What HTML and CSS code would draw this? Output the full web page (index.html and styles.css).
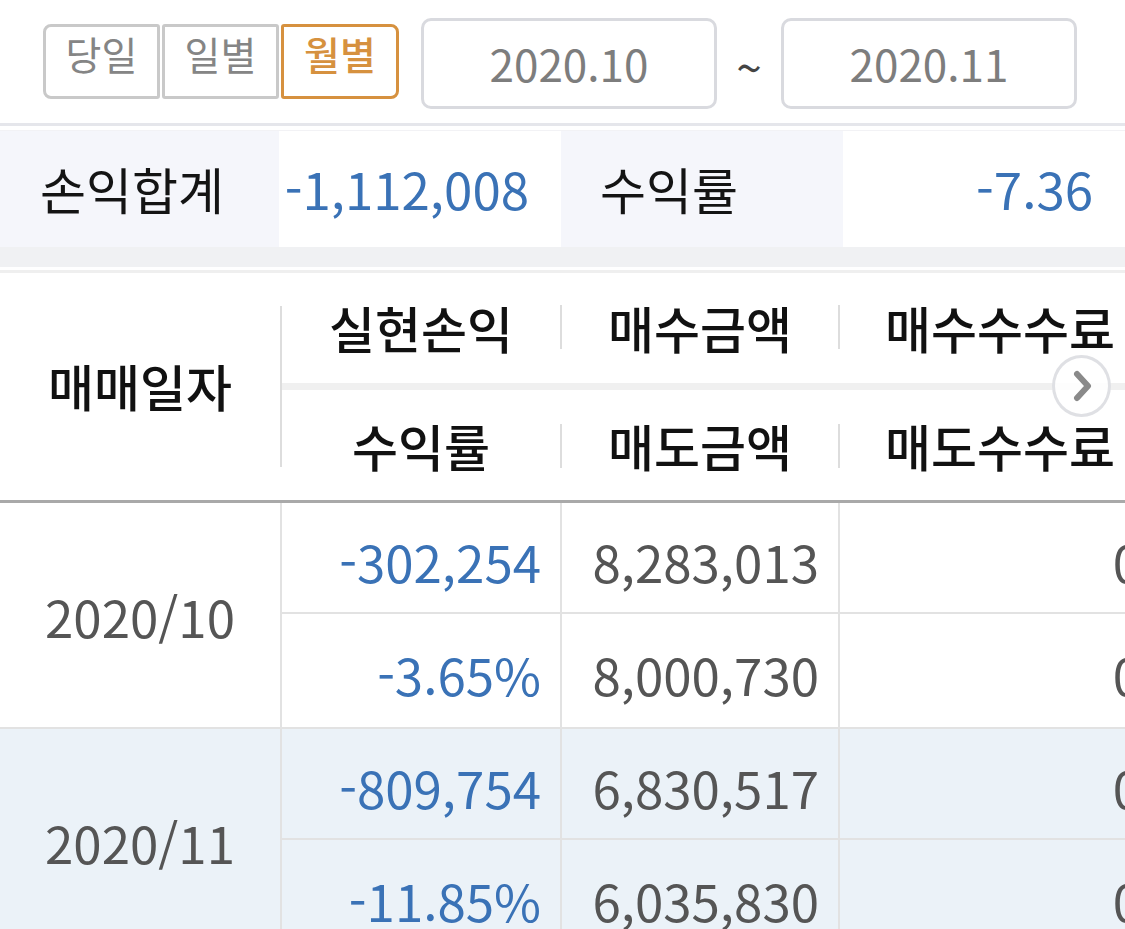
FILE: index.html
```html
<!DOCTYPE html>
<html lang="ko">
<head>
<meta charset="utf-8">
<title>월별 손익</title>
<link rel="stylesheet" href="styles.css">
</head>
<body>
<div class="page">
  <div class="toolbar">
    <div class="tabs">
      <div class="tab tab-first">당일</div>
      <div class="tab">일별</div>
      <div class="tab tab-last tab-active">월별</div>
    </div>
    <div class="date-box">2020.10</div>
    <div class="tilde">~</div>
    <div class="date-box">2020.11</div>
  </div>

  <div class="summary">
    <div class="sum-label sum-label-1">손익합계</div>
    <div class="sum-value sum-value-1">-1,112,008</div>
    <div class="sum-label sum-label-2">수익률</div>
    <div class="sum-value sum-value-2">-7.36</div>
  </div>
  <div class="band"></div>

  <div class="table">
    <div class="thead">
      <div class="h-date">매매일자</div>
      <div class="h-vsep"></div>
      <div class="h-right">
        <div class="h-row">
          <div class="h-cell h-c1">실현손익</div>
          <div class="h-sep"></div>
          <div class="h-cell h-c2">매수금액</div>
          <div class="h-sep"></div>
          <div class="h-cell h-c3">매수수수료</div>
        </div>
        <div class="h-band"></div>
        <div class="h-row">
          <div class="h-cell h-c1">수익률</div>
          <div class="h-sep"></div>
          <div class="h-cell h-c2">매도금액</div>
          <div class="h-sep"></div>
          <div class="h-cell h-c3">매도수수료</div>
        </div>
      </div>
      <div class="scroll-btn">
        <svg width="20" height="32" viewBox="0 0 20 32"><path d="M4 4 L15 16 L4 28" fill="none" stroke="#8a8a8a" stroke-width="6" stroke-linecap="round" stroke-linejoin="round"/></svg>
      </div>
    </div>

    <div class="group">
      <div class="cell c-date">2020/10</div>
      <div class="cell c1 top blue">-302,254</div>
      <div class="cell c2 top">8,283,013</div>
      <div class="cell c3 top">0</div>
      <div class="cell c1 blue">-3.65%</div>
      <div class="cell c2">8,000,730</div>
      <div class="cell c3">0</div>
    </div>

    <div class="group group-alt">
      <div class="cell c-date">2020/11</div>
      <div class="cell c1 top blue">-809,754</div>
      <div class="cell c2 top">6,830,517</div>
      <div class="cell c3 top">0</div>
      <div class="cell c1 blue">-11.85%</div>
      <div class="cell c2">6,035,830</div>
      <div class="cell c3">0</div>
    </div>
  </div>
</div>
</body>
</html>
```

FILE: styles.css
```css
* { box-sizing: border-box; }

html, body {
  margin: 0;
  padding: 0;
  background: #ffffff;
}

body {
  width: 1125px;
  height: 929px;
  overflow: hidden;
  font-family: "Noto Sans CJK KR", "Noto Sans", sans-serif;
  color: #111111;
}

.page {
  width: 1160px;
}

/* toolbar */
.toolbar {
  height: 126px;
  display: flex;
  align-items: center;
  padding: 0 0 2px 43px;
  border-bottom: 3px solid #e5e6eb;
}

.tabs {
  display: flex;
  gap: 2px;
  margin-top: 2px;
}

.tab {
  width: 117px;
  height: 75px;
  border: 3px solid #c9c9c9;
  border-radius: 3px;
  display: flex;
  align-items: center;
  justify-content: center;
  font-size: 39px;
  line-height: 1;
  color: #858585;
  padding-bottom: 16px;
}

.tab-first { border-radius: 8px 3px 3px 8px; }
.tab-last { border-radius: 3px 8px 8px 3px; width: 118px; }

.tab-active {
  border-color: #d6913f;
  color: #d6913f;
  font-weight: 500;
}

.date-box {
  width: 296px;
  height: 91px;
  border: 3px solid #d9dadf;
  border-radius: 10px;
  display: flex;
  align-items: center;
  justify-content: center;
  font-size: 44px;
  line-height: 1;
  color: #7d7d7d;
  margin-left: 22px;
  margin-top: 6px;
  padding-bottom: 2px;
}

.tilde + .date-box { margin-left: 0; }

.tilde {
  width: 64px;
  text-align: center;
  font-size: 46px;
  color: #444444;
  line-height: 1;
  margin-top: 10px;
}

/* summary */
.summary {
  margin-top: 4px;
  display: flex;
  height: 117px;
  border-top: 1px solid #f2f2f5;
}

.sum-label, .sum-value {
  display: flex;
  align-items: center;
  font-size: 50px;
  line-height: 1;
  padding-bottom: 2px;
}

.sum-label {
  background: #f5f6fb;
  color: #141414;
}

.sum-label-1 { width: 279px; padding-left: 40px; }
.sum-label-2 { width: 282px; padding-left: 39px; }

.sum-value {
  justify-content: flex-end;
  padding-right: 32px;
  color: #3a72b6;
  font-size: 51px;
}
.sum-value-1 { width: 282px; }
.sum-value-2 { width: 282px; }

.band {
  height: 26px;
  background: #ffffff;
  border-top: 20px solid #f0f1f3;
  border-bottom: 3px solid #efefef;
}

/* table header */
.thead {
  position: relative;
  display: flex;
  height: 230px;
  border-bottom: 3px solid #a9a9a9;
}

.h-date {
  width: 280px;
  display: flex;
  align-items: center;
  justify-content: center;
  font-size: 50px;
  font-weight: 500;
  line-height: 1;
  padding-bottom: 4px;
}

.h-vsep {
  width: 2px;
  margin: 33px 0 33px;
  background: #dddddd;
}

.h-right {
  display: flex;
  flex-direction: column;
  width: 878px;
}

.h-row {
  display: flex;
  align-items: center;
  height: 110px;
}

.h-band {
  height: 7px;
  background: #f0f0f0;
}

.h-cell {
  height: 100%;
  display: flex;
  align-items: center;
  justify-content: center;
  font-size: 50px;
  font-weight: 500;
  line-height: 1;
}

.h-row:first-child .h-cell { padding-bottom: 2px; }
.h-row:last-child .h-cell { padding-top: 0; }

.h-c1 { width: 278px; }
.h-c2 { width: 276px; }
.h-c3 { width: 320px; }

.h-sep {
  width: 2px;
  height: 44px;
  background: #dddddd;
}

.h-row:first-child .h-sep { margin-bottom: 2px; }
.h-row:last-child .h-sep { margin-top: 2px; }

.scroll-btn {
  position: absolute;
  left: 1052px;
  top: 82px;
  width: 59px;
  height: 62px;
  border: 3px solid #dfe0e4;
  border-radius: 50%;
  background: rgba(255, 255, 255, 0.85);
  display: flex;
  align-items: center;
  justify-content: center;
  padding-left: 2px;
}

/* body rows */
.group {
  display: grid;
  grid-template-columns: 282px 280px 278px 320px;
  grid-template-rows: 111px 113px;
  border-bottom: 2px solid #e2e2e2;
}

.group-alt { background: #ebf2f8; }

.cell {
  display: flex;
  align-items: center;
  justify-content: flex-end;
  padding-right: 19px;
  font-size: 51px;
  line-height: 1;
  color: #555555;
  padding-top: 7px;
}

.c-date {
  grid-row: 1 / span 2;
  justify-content: center;
  padding-right: 0;
  border-right: 2px solid #e2e2e2;
  padding-top: 2px;
}

.c1, .c2 { border-right: 2px solid #e2e2e2; }

.top { border-bottom: 2px solid #e2e2e2; }

.blue { color: #3a72b6; }
```
